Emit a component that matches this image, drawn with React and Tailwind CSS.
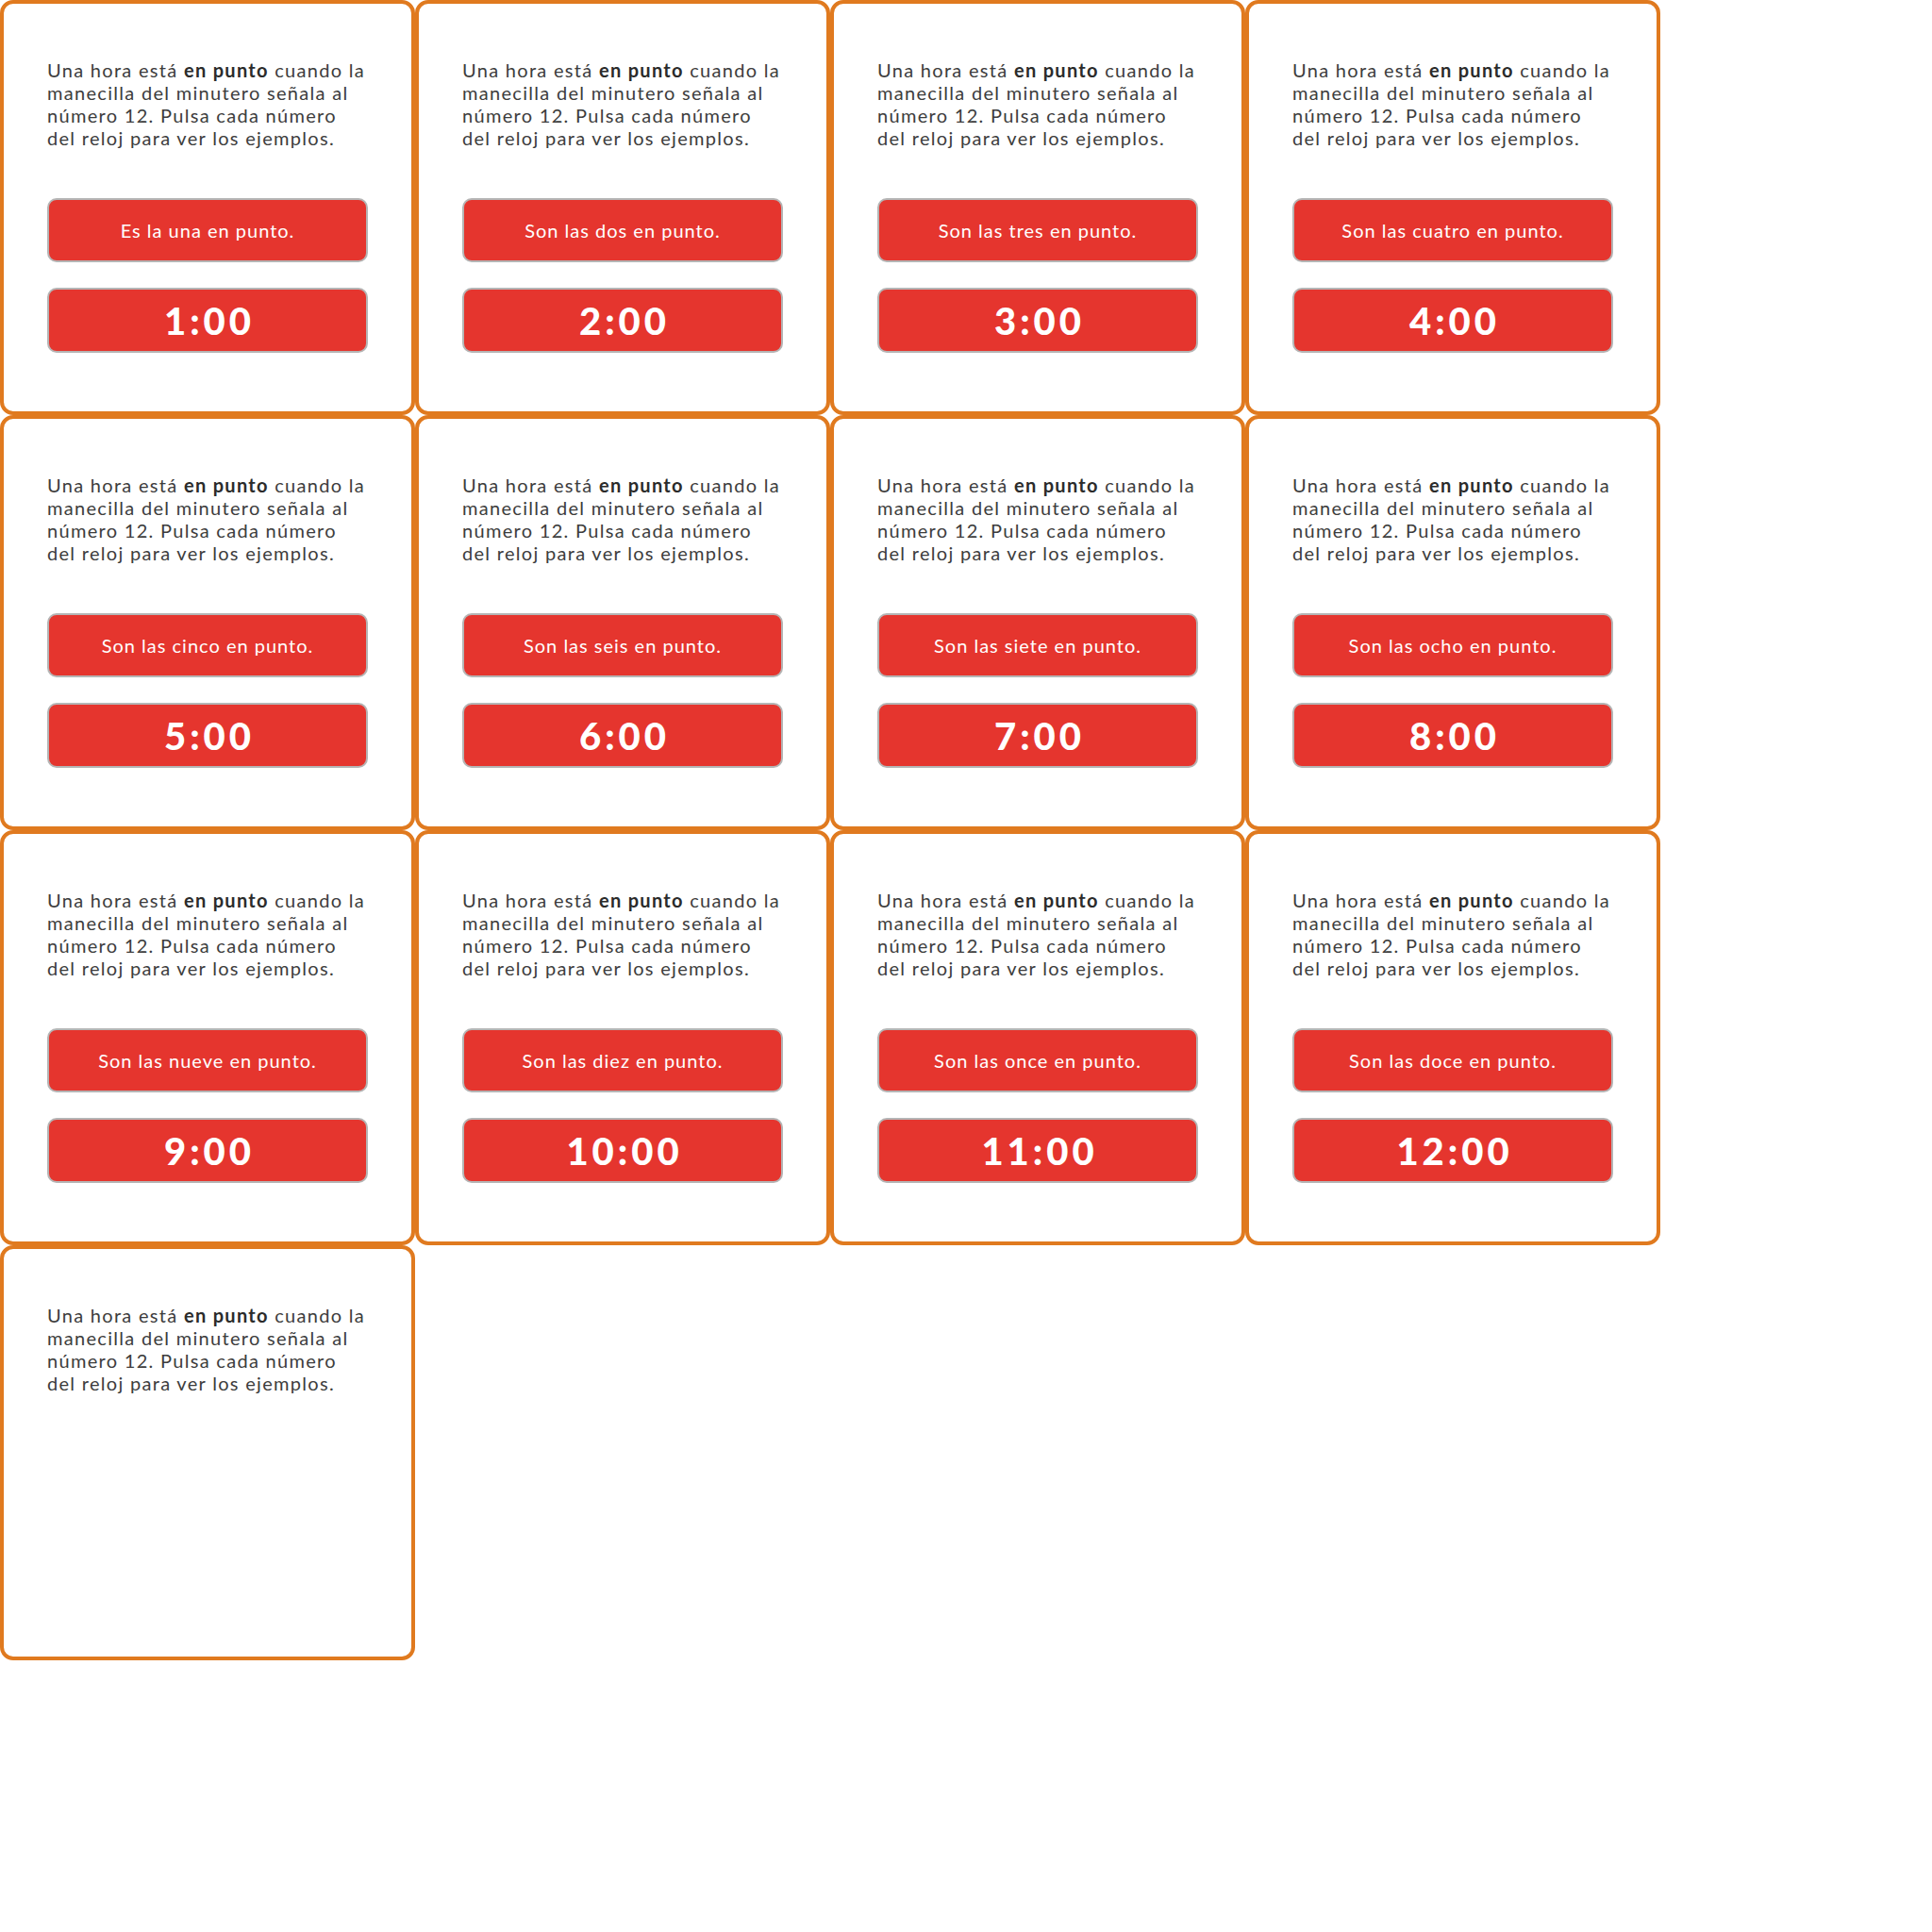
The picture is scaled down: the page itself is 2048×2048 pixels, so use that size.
import React from 'react';

const hours = [
  ['Es la una en punto.', '1:00'],
  ['Son las dos en punto.', '2:00'],
  ['Son las tres en punto.', '3:00'],
  ['Son las cuatro en punto.', '4:00'],
  ['Son las cinco en punto.', '5:00'],
  ['Son las seis en punto.', '6:00'],
  ['Son las siete en punto.', '7:00'],
  ['Son las ocho en punto.', '8:00'],
  ['Son las nueve en punto.', '9:00'],
  ['Son las diez en punto.', '10:00'],
  ['Son las once en punto.', '11:00'],
  ['Son las doce en punto.', '12:00'],
];

function Intro() {
  return (
    <p className="whitespace-nowrap text-[20px] leading-[24px] tracking-[1.3px] text-[#3d3d3d]">
      Una hora está <b className="font-bold text-[#2b2b2b]">en punto</b> cuando la
      <br />
      manecilla del minutero señala al
      <br />
      número 12. Pulsa cada número
      <br />
      del reloj para ver los ejemplos.
    </p>
  );
}

function Card({ label, time }) {
  return (
    <div className="box-border flex h-[440px] w-[440px] flex-col rounded-[14px] border-4 border-[#e07a1f] bg-white pl-[46px] pr-[46px] pt-[58px]">
      <Intro />
      {label && (
        <>
          <button className="mt-[52px] flex h-[68px] w-[340px] items-center justify-center rounded-[10px] border-2 border-[#b5b5b5] bg-[#e5352e] text-[20px] tracking-[1px] text-white">
            {label}
          </button>
          <button className="mt-[27px] flex h-[69px] w-[340px] items-center justify-center rounded-[10px] border-2 border-[#b5b5b5] bg-[#e5352e] pl-[4px] text-[40px] font-black tracking-[4px] text-white">
            {time}
          </button>
        </>
      )}
    </div>
  );
}

export default function App() {
  return (
    <div className="min-h-[2048px] bg-white" style={{ fontFamily: 'Lato, "Noto Sans", sans-serif' }}>
      <div className="grid w-[1760px] grid-cols-[repeat(4,440px)]">
        {hours.map(([label, time]) => (
          <Card key={time} label={label} time={time} />
        ))}
        <Card />
      </div>
    </div>
  );
}
